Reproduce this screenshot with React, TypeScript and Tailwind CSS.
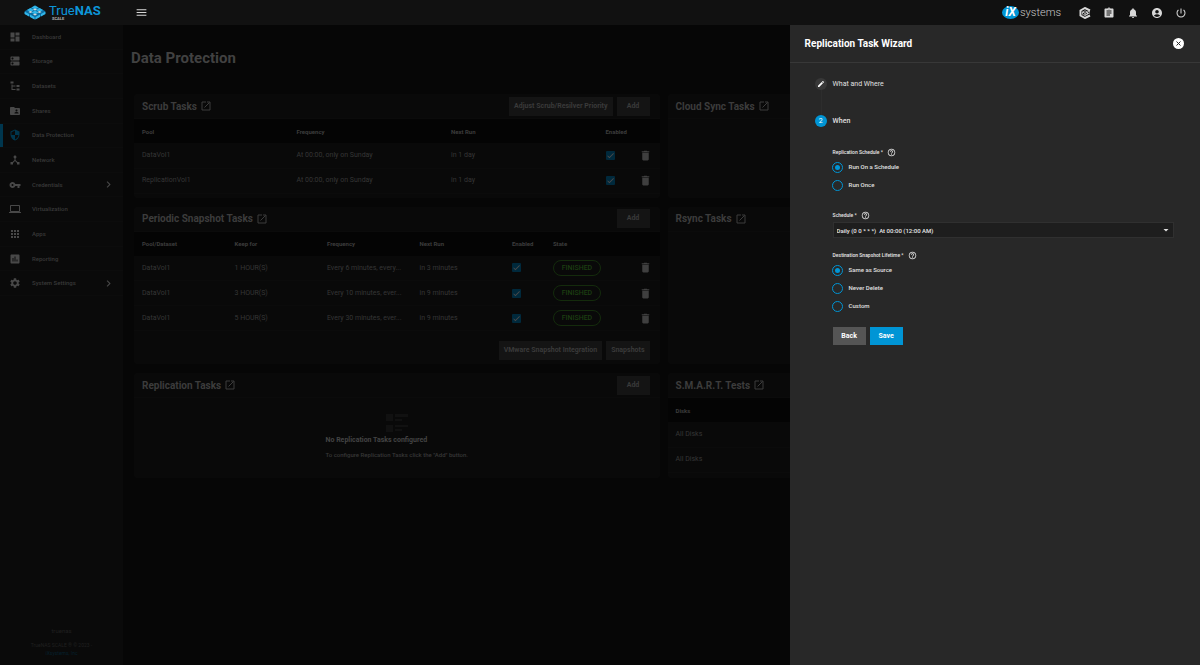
import { useState } from 'react';
import type { ReactNode } from 'react';
import type { IconType } from 'react-icons';
import {
  MdAccountCircle,
  MdApps,
  MdArrowDropDown,
  MdAssessment,
  MdAssignment,
  MdCheck,
  MdChevronRight,
  MdCreate,
  MdDashboard,
  MdDelete,
  MdDeviceHub,
  MdDns,
  MdFolderShared,
  MdHelpOutline,
  MdLaptop,
  MdMenu,
  MdNotifications,
  MdPowerSettingsNew,
  MdSecurity,
  MdSettings,
  MdVpnKey,
} from 'react-icons/md';

function FileTreeIcon({ className }: { className?: string }) {
  return (
    <svg viewBox="0 0 24 24" fill="currentColor" className={className}>
      <path d="M3 3h6v4H3V3m12 7h6v4h-6v-4m0 7h6v4h-6v-4m-2-4H7v5h6v2H5V9h2v2h6v2z" />
    </svg>
  );
}

function OpenIcon() {
  return (
    <svg viewBox="0 0 20 20" fill="none" stroke="currentColor" strokeWidth="2" className="size-[10px]">
      <path d="M10 2H2v16h16v-8" />
      <path d="M7 13L17 3M12 2h6v8" />
    </svg>
  );
}

function TrueNasMark() {
  return (
    <svg viewBox="0 0 44 30" className="h-[15px] w-[22px]">
      <path d="M22 1l20 11v6L22 29 2 18v-6z" fill="#0b6fa4" />
      <g fill="#31b5e8">
        <path d="M22 1l7 4-7 4-7-4z" />
        <path d="M13 6l7 4-7 4-7-4z" />
        <path d="M31 6l7 4-7 4-7-4z" />
        <path d="M22 11l7 4-7 4-7-4z" />
        <path d="M1 13l9 5v5l-9-5z" />
        <path d="M43 13l-9 5v5l9-5z" />
        <path d="M12 19l9 5v5l-9-5z" />
        <path d="M32 19l-9 5v5l9-5z" />
      </g>
      <g fill="#d6d6d6">
        <path d="M22 7l4 2-4 2-4-2z" />
        <path d="M13 12l4 2-4 2-4-2z" />
        <path d="M31 12l4 2-4 2-4-2z" />
        <path d="M22 17l4 2-4 2-4-2z" />
      </g>
    </svg>
  );
}

function TrueCommandIcon({ className }: { className?: string }) {
  return (
    <svg viewBox="0 0 24 24" fill="none" stroke="currentColor" className={className}>
      <path d="M22 7L12 2 3 7v10l9 5 10-5" strokeWidth="4" />
      <path d="M12 7.500l5 2.500v4.500L12 17l-5-2.500V10z" strokeWidth="1.500" />
      <path d="M7 10l5 2.500 10-4.500M12 12.500V17M13 15.500l9-4" strokeWidth="1.800" />
    </svg>
  );
}

type NavItem = { label: string; icon: IconType | typeof FileTreeIcon; active?: boolean; children?: boolean };

const navItems: NavItem[] = [
  { label: 'Dashboard', icon: MdDashboard },
  { label: 'Storage', icon: MdDns },
  { label: 'Datasets', icon: FileTreeIcon },
  { label: 'Shares', icon: MdFolderShared },
  { label: 'Data Protection', icon: MdSecurity, active: true },
  { label: 'Network', icon: MdDeviceHub },
  { label: 'Credentials', icon: MdVpnKey, children: true },
  { label: 'Virtualization', icon: MdLaptop },
  { label: 'Apps', icon: MdApps },
  { label: 'Reporting', icon: MdAssessment },
  { label: 'System Settings', icon: MdSettings, children: true },
];

const scrubTasks = ['DataVol1', 'ReplicationVol1'];

const snapshotTasks = [
  { keep: '1 HOUR(S)', frequency: 'Every 6 minutes, every...', next: 'in 3 minutes' },
  { keep: '3 HOUR(S)', frequency: 'Every 10 minutes, ever...', next: 'in 9 minutes' },
  { keep: '5 HOUR(S)', frequency: 'Every 30 minutes, ever...', next: 'in 9 minutes' },
];

function Header() {
  const actions = [
    { label: 'TrueCommand', icon: TrueCommandIcon },
    { label: 'Jobs', icon: MdAssignment },
    { label: 'Alerts', icon: MdNotifications },
    { label: 'Account', icon: MdAccountCircle },
    { label: 'Power', icon: MdPowerSettingsNew },
  ];

  return (
    <header className="flex h-[25px] items-center bg-[#111111] text-[#d8d8d8]">
      <a href="#" className="flex w-[123px] items-center gap-[3px] pl-6">
        <TrueNasMark />
        <span className="flex flex-col">
          <span className="text-[13px] leading-[13px] text-[#0d95d8]">
            True<b>NAS</b>
          </span>
          <span className="pl-[3px] text-[4px] leading-[4px] font-bold text-[#b0b0b0]">SCALE</span>
        </span>
      </a>
      <button aria-label="Toggle menu" className="ml-3">
        <MdMenu className="size-[13px]" />
      </button>
      <div className="ml-auto flex items-center pr-[7px]">
        <a href="#" aria-label="iXsystems" className="mr-3 flex items-center gap-px">
          <span className="flex h-[13px] w-[17px] items-center justify-center rounded-[50%] bg-[#0095d5] text-[12px] leading-[13px] font-bold text-white italic">
            iX
          </span>
          <span className="text-[11px] leading-[13px] font-light text-[#c8c8c8]">systems</span>
        </a>
        {actions.map(({ label, icon: Icon }) => (
          <button key={label} aria-label={label} className="flex w-6 justify-center">
            <Icon className="size-3" />
          </button>
        ))}
      </div>
    </header>
  );
}

function Sidebar() {
  return (
    <aside className="flex w-[123px] shrink-0 flex-col bg-[#0a0a0a]">
      <nav>
        <ul className="grid h-[271px] auto-rows-fr">
          {navItems.map(({ label, icon: Icon, active, children }) => (
            <li key={label} className="flex border-b border-[#0c0c0c]">
              <a
                href="#"
                className={
                  active
                    ? 'flex flex-1 items-center border-l-[3px] border-[#00364e] pr-2 pl-[6px] text-[#393939]'
                    : 'flex flex-1 items-center border-l-[3px] border-transparent pr-2 pl-[6px] text-[#393939]'
                }
              >
                <Icon className={active ? 'size-3 text-[#00364e]' : 'size-3 text-[#484848]'} />
                <span className="pl-[11px] text-[6px] leading-[10px] font-medium">{label}</span>
                {children && <MdChevronRight className="ml-auto size-[13px] text-[#484848]" />}
              </a>
            </li>
          ))}
        </ul>
      </nav>
      <footer className="mt-auto flex flex-col items-center pb-2 text-[5px] leading-[8px] text-[#202020]">
        <span className="mb-[6px] text-[6px]">truenas</span>
        <span>TrueNAS SCALE ® © 2023 -</span>
        <a href="#" className="text-[#06202c]">
          iXsystems, Inc
        </a>
      </footer>
    </aside>
  );
}

function DimButton({ children }: { children: ReactNode }) {
  return <button className="h-[19px] bg-[#141414] px-[5px] text-[7px] font-bold text-[#3a3a3a]">{children}</button>;
}

function AddButton() {
  return <button className="h-[19px] w-[33px] bg-[#141414] text-[7px] font-bold text-[#3a3a3a]">Add</button>;
}

function Card({ title, actions, children }: { title: string; actions?: ReactNode; children?: ReactNode }) {
  return (
    <section className="flex flex-col rounded-xs bg-[#090909]">
      <div className="flex h-[25px] items-center gap-1 border-b border-[#0b0b0b] pr-[10px] pl-2 text-[#3c3c3c]">
        <h2 className="text-[10px] font-bold">{title}</h2>
        <OpenIcon />
        <div className="ml-auto flex gap-1">{actions}</div>
      </div>
      {children}
    </section>
  );
}

function Th({ children, className = '' }: { children?: ReactNode; className?: string }) {
  return <th className={`h-[24px] pl-2 text-left text-[6px] font-bold text-[#3c3c3c] ${className}`}>{children}</th>;
}

function Td({ children, className = '' }: { children?: ReactNode; className?: string }) {
  return <td className={`h-[25px] border-b border-[#0b0b0b] pl-2 whitespace-nowrap ${className}`}>{children}</td>;
}

function EnabledBox({ label }: { label: string }) {
  return (
    <span className="relative flex w-[26px] justify-center pr-4">
      <input
        type="checkbox"
        defaultChecked
        aria-label={label}
        className="size-[9px] shrink-0 appearance-none rounded-[1px] bg-[#00293c]"
      />
      <MdCheck className="pointer-events-none absolute size-[9px] text-[#4a4a4a]" />
    </span>
  );
}

function DeleteButton() {
  return (
    <button aria-label="Delete" className="flex w-full justify-end pr-2 text-[#3f3f3f]">
      <MdDelete className="size-[13px] shrink-0" />
    </button>
  );
}

function ScrubCard() {
  return (
    <Card
      title="Scrub Tasks"
      actions={
        <>
          <DimButton>Adjust Scrub/Resilver Priority</DimButton>
          <AddButton />
        </>
      }
    >
      <table className="mb-1 w-full table-fixed text-[7px] text-[#363636]">
        <thead className="bg-[#040404]">
          <tr>
            <Th className="w-[29.4%]">Pool</Th>
            <Th className="w-[29.4%]">Frequency</Th>
            <Th className="w-[29.4%]">Next Run</Th>
            <Th>Enabled</Th>
            <Th className="w-[5%]" />
          </tr>
        </thead>
        <tbody>
          {scrubTasks.map((pool) => (
            <tr key={pool}>
              <Td>{pool}</Td>
              <Td>At 00:00, only on Sunday</Td>
              <Td>in 1 day</Td>
              <Td>
                <EnabledBox label={`${pool} enabled`} />
              </Td>
              <Td>
                <DeleteButton />
              </Td>
            </tr>
          ))}
        </tbody>
      </table>
    </Card>
  );
}

function SnapshotCard() {
  return (
    <Card title="Periodic Snapshot Tasks" actions={<AddButton />}>
      <table className="w-full table-fixed text-[7px] text-[#363636]">
        <thead className="bg-[#040404]">
          <tr>
            <Th className="w-[17.6%]">Pool/Dataset</Th>
            <Th className="w-[17.6%]">Keep for</Th>
            <Th className="w-[17.6%]">Frequency</Th>
            <Th className="w-[17.6%]">Next Run</Th>
            <Th className="w-[7.8%]">Enabled</Th>
            <Th>State</Th>
            <Th className="w-[5%]" />
          </tr>
        </thead>
        <tbody>
          {snapshotTasks.map((task) => (
            <tr key={task.keep}>
              <Td>DataVol1</Td>
              <Td>{task.keep}</Td>
              <Td>{task.frequency}</Td>
              <Td>{task.next}</Td>
              <Td>
                <EnabledBox label={`${task.keep} snapshot enabled`} />
              </Td>
              <Td>
                <span className="flex h-4 w-12 items-center justify-center rounded-full border border-[#142b0c] text-[7px] font-medium text-[#1c3d11]">
                  FINISHED
                </span>
              </Td>
              <Td>
                <DeleteButton />
              </Td>
            </tr>
          ))}
        </tbody>
      </table>
      <div className="flex justify-end gap-1 pt-[10px] pr-[10px] pb-1">
        <DimButton>VMware Snapshot Integration</DimButton>
        <DimButton>Snapshots</DimButton>
      </div>
    </Card>
  );
}

function ReplicationCard() {
  return (
    <Card title="Replication Tasks" actions={<AddButton />}>
      <div className="flex flex-1 flex-col items-center pt-4">
        <div className="flex flex-col text-[#373737]">
          <svg viewBox="0 0 22 18" fill="#111111" className="h-[18px] w-[22px] self-center">
            <path d="M0 0h7v7H0zM9 0h13v3H9zM9 5h7v2H9zM0 11h7v7H0zM9 11h13v2H9zM9 15h7v2H9z" />
          </svg>
          <h3 className="mt-[3px] text-[7px] leading-[10px] font-bold text-[#444444]">No Replication Tasks configured</h3>
          <p className="mt-[5px] text-[6px] leading-[10px] font-medium">
            To configure Replication Tasks click the &quot;Add&quot; button.
          </p>
        </div>
      </div>
    </Card>
  );
}

function SmartCard() {
  return (
    <Card title="S.M.A.R.T. Tests">
      <table className="mb-[5px] w-full text-[7px] text-[#363636]">
        <thead className="bg-[#040404]">
          <tr>
            <Th>Disks</Th>
          </tr>
        </thead>
        <tbody>
          <tr>
            <Td>All Disks</Td>
          </tr>
          <tr>
            <Td>All Disks</Td>
          </tr>
        </tbody>
      </table>
    </Card>
  );
}

function FieldLabel({ children }: { children: ReactNode }) {
  return (
    <span className="flex h-[10px] items-center gap-1 text-[5px] leading-[8px] font-medium text-[#e8e8e8]">
      {children}
      <MdHelpOutline className="size-[9px]" />
    </span>
  );
}

type RadioGroupProps = {
  name: string;
  label: string;
  options: string[];
  value: string;
  onChange: (value: string) => void;
};

function RadioGroup({ name, label, options, value, onChange }: RadioGroupProps) {
  return (
    <fieldset>
      <legend className="mb-px">
        <FieldLabel>{label} *</FieldLabel>
      </legend>
      {options.map((option) => (
        <label
          key={option}
          className="flex h-[18px] items-center gap-[6px] text-[6px] leading-[8px] font-medium text-[#e0e0e0]"
        >
          <span className="relative -ml-px flex size-[11px] items-center justify-center">
            <input
              type="radio"
              name={name}
              checked={value === option}
              onChange={() => onChange(option)}
              className="size-[11px] appearance-none rounded-full border border-[#0095d5]"
            />
            {value === option && <span className="pointer-events-none absolute size-[5px] rounded-full bg-[#0095d5]" />}
          </span>
          {option}
        </label>
      ))}
    </fieldset>
  );
}

function ReplicationWizard() {
  const [runMode, setRunMode] = useState('Run On a Schedule');
  const [lifetime, setLifetime] = useState('Same as Source');

  return (
    <div
      role="dialog"
      aria-labelledby="wizard-title"
      className="fixed top-[25px] right-0 bottom-0 w-[34.2%] overflow-y-auto bg-[#282828] text-[#e0e0e0]"
    >
      <div className="flex h-[38px] items-center justify-between border-b border-[#383838] pr-4 pl-[15px]">
        <h2 id="wizard-title" className="text-[10px] font-bold text-white">
          Replication Task Wizard
        </h2>
        <button aria-label="Close">
          <svg viewBox="0 0 22 22" className="size-[11px]">
            <circle cx="11" cy="11" r="11" fill="#fff" />
            <path d="M7 7l8 8M15 7l-8 8" stroke="#282828" strokeWidth="2" />
          </svg>
        </button>
      </div>

      <div className="flex flex-col pt-[15px] pr-[26px] pl-[25px]">
        {/* Steps */}
        <div className="flex h-3 items-center gap-[6px] text-[7px]">
          <span className="flex size-3 items-center justify-center rounded-full bg-[#383838] text-white">
            <MdCreate className="size-2" />
          </span>
          What and Where
        </div>
        <div className="ml-[6px] h-[25px] border-l border-[#2d2d2d]" />
        <div className="flex h-3 items-center gap-[6px] text-[7px] font-medium">
          <span className="flex size-3 items-center justify-center rounded-full bg-[#0095d5] font-normal text-white">2</span>
          When
        </div>

        {/* Step content */}
        <form className="mt-5 flex flex-col pl-[18px]" onSubmit={(e) => e.preventDefault()}>
          <RadioGroup
            name="runMode"
            label="Replication Schedule"
            options={['Run On a Schedule', 'Run Once']}
            value={runMode}
            onChange={setRunMode}
          />

          <div className="mt-4">
            <label htmlFor="schedule" className="block">
              <FieldLabel>Schedule *</FieldLabel>
            </label>
            <div className="relative mt-[2px]">
              <select
                id="schedule"
                className="block h-4 w-full appearance-none border border-[#303030] bg-[#1e1e1e] px-[3px] text-[6px] font-medium text-[#e8e8e8]"
              >
                <option>Daily (0 0 * * *)&nbsp; At 00:00 (12:00 AM)</option>
              </select>
              <MdArrowDropDown className="pointer-events-none absolute top-[2px] right-[2px] size-3" />
            </div>
          </div>

          <div className="mt-3">
            <RadioGroup
              name="lifetime"
              label="Destination Snapshot Lifetime"
              options={['Same as Source', 'Never Delete', 'Custom']}
              value={lifetime}
              onChange={setLifetime}
            />
          </div>

          <div className="mt-3 flex gap-1 text-[7px] font-bold text-white">
            <button type="button" className="h-[18px] w-[33px] bg-[#555555]">
              Back
            </button>
            <button type="submit" className="h-[18px] w-[33px] bg-[#0095d5]">
              Save
            </button>
          </div>
        </form>
      </div>
    </div>
  );
}

export default function App() {
  return (
    <div className="flex min-h-screen flex-col bg-[#060606] font-['Roboto',sans-serif]">
      <Header />
      <div className="flex flex-1">
        <Sidebar />
        <main className="flex-1 pr-[7px] pl-[11px]">
          <h1 className="-ml-[3px] pt-[22px] text-[15px] leading-[22px] font-bold text-[#414141]">Data Protection</h1>
          <div className="mt-[25px] grid grid-cols-2 gap-x-2 gap-y-[9px]">
            <ScrubCard />
            <Card title="Cloud Sync Tasks" />
            <SnapshotCard />
            <Card title="Rsync Tasks" />
            <ReplicationCard />
            <SmartCard />
          </div>
        </main>
      </div>
      <ReplicationWizard />
    </div>
  );
}
